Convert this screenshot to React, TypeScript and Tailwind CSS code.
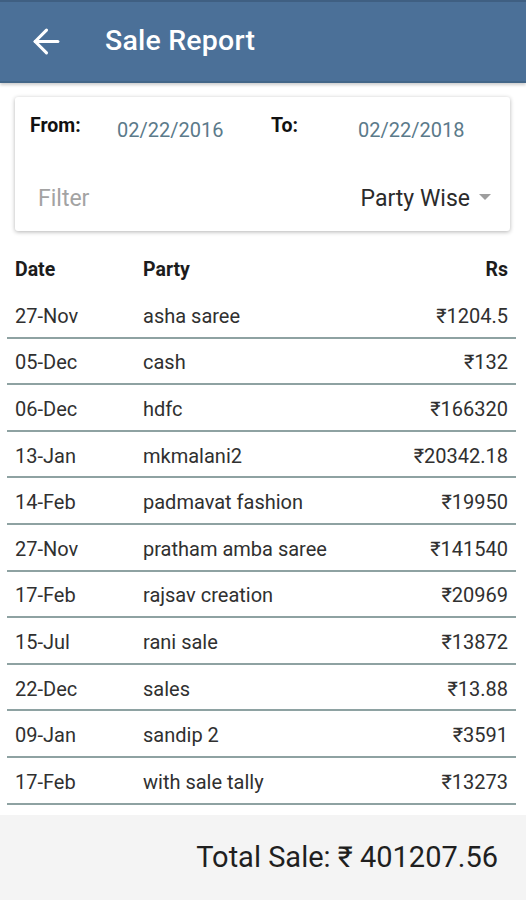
import { ArrowLeft } from 'lucide-react';

const rows = [
  { date: '27-Nov', party: 'asha saree', amount: '₹1204.5' },
  { date: '05-Dec', party: 'cash', amount: '₹132' },
  { date: '06-Dec', party: 'hdfc', amount: '₹166320' },
  { date: '13-Jan', party: 'mkmalani2', amount: '₹20342.18' },
  { date: '14-Feb', party: 'padmavat fashion', amount: '₹19950' },
  { date: '27-Nov', party: 'pratham amba saree', amount: '₹141540' },
  { date: '17-Feb', party: 'rajsav creation', amount: '₹20969' },
  { date: '15-Jul', party: 'rani sale', amount: '₹13872' },
  { date: '22-Dec', party: 'sales', amount: '₹13.88' },
  { date: '09-Jan', party: 'sandip 2', amount: '₹3591' },
  { date: '17-Feb', party: 'with sale tally', amount: '₹13273' },
];

export default function App() {
  return (
    <div className="w-[526px] h-[900px] bg-white flex flex-col overflow-hidden font-['Roboto',sans-serif]">
      {/* toolbar */}
      <div className="h-[83px] shrink-0 bg-[#4b7098] border-t-2 border-t-[#3f5f82] border-b-2 border-b-[#436688] shadow-[0_2px_3px_rgba(0,0,0,0.2)] flex items-center">
        <ArrowLeft className="ml-[27px] text-white" size={39} strokeWidth={1.9} />
        <h1 className="ml-[39px] text-white text-[28.5px] font-medium tracking-[0.2px]">Sale Report</h1>
      </div>

      {/* filter card */}
      <div className="ml-[15px] mr-[16px] mt-[14px] h-[134px] shrink-0 bg-white rounded-[3px] shadow-[0_1px_4px_rgba(0,0,0,0.3)] px-[15px] pt-[19px]">
        <div className="flex items-end h-[24px]">
          <span className="w-[87px] text-[19.5px] font-bold text-[#111]">From:</span>
          <span className="w-[154px] text-[20px] text-[#5b7a8a] translate-y-[5px]">02/22/2016</span>
          <span className="w-[87px] text-[19.5px] font-bold text-[#111]">To:</span>
          <span className="text-[20px] text-[#5b7a8a] translate-y-[5px]">02/22/2018</span>
        </div>
        <div className="flex items-center justify-between mt-[42px] pl-[8px] pr-[4px]">
          <span className="text-[23px] text-[#a3a3a3]">Filter</span>
          <div className="flex items-center gap-[9px]">
            <span className="text-[23px] text-[#2b2b2b]">Party Wise</span>
            <svg width="12" height="6" viewBox="0 0 12 6" className="-translate-y-[2px]">
              <path d="M0 0 L12 0 L6 6 Z" fill="#9e9e9e" />
            </svg>
          </div>
        </div>
      </div>

      {/* table */}
      <div className="mt-[17px] ml-[7px] mr-[10px] flex-1">
        <div className="flex items-center h-[44px] pl-[8px] pr-[8px] text-[19.5px] font-bold text-[#1c1c1c]">
          <span className="w-[128px]">Date</span>
          <span className="flex-1">Party</span>
          <span>Rs</span>
        </div>
        {rows.map((r, i) => (
          <div
            key={i}
            className="flex items-center h-[46.6px] pl-[8px] pr-[8px] pt-[3px] border-b-2 border-[#8ea2a2] text-[20px] text-[#303030]"
          >
            <span className="w-[128px]">{r.date}</span>
            <span className="flex-1">{r.party}</span>
            <span>{r.amount}</span>
          </div>
        ))}
      </div>

      {/* total */}
      <div className="h-[85px] shrink-0 bg-[#f4f4f4] flex items-center justify-end pr-[28px]">
        <span className="text-[29px] text-[#1f1f1f]">Total Sale: ₹ 401207.56</span>
      </div>
    </div>
  );
}
